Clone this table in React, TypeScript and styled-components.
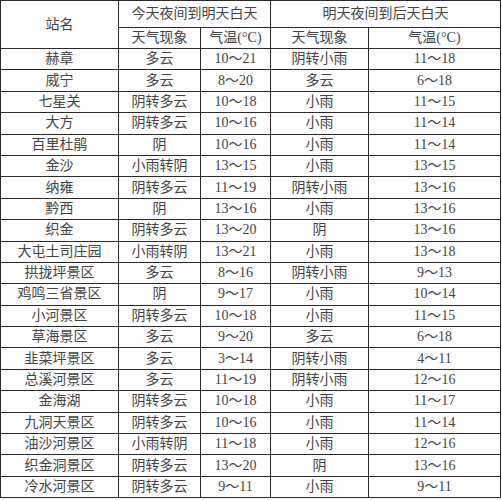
import styled, { createGlobalStyle } from "styled-components";

const GlobalStyle = createGlobalStyle`
  html, body {
    margin: 0;
    padding: 0;
    background: #ffffff;
  }
`;

type Row = [string, string, string, string, string];

const rows: Row[] = [
  ["赫章", "多云", "10～21", "阴转小雨", "11～18"],
  ["威宁", "多云", "8～20", "多云", "6～18"],
  ["七星关", "阴转多云", "10～18", "小雨", "11～15"],
  ["大方", "阴转多云", "10～16", "小雨", "11～14"],
  ["百里杜鹃", "阴", "10～16", "小雨", "11～14"],
  ["金沙", "小雨转阴", "13～15", "小雨", "13～15"],
  ["纳雍", "阴转多云", "11～19", "阴转小雨", "13～16"],
  ["黔西", "阴", "13～16", "小雨", "13～16"],
  ["织金", "阴转多云", "13～20", "阴", "13～16"],
  ["大屯土司庄园", "小雨转阴", "13～21", "小雨", "13～18"],
  ["拱拢坪景区", "多云", "8～16", "阴转小雨", "9～13"],
  ["鸡鸣三省景区", "阴", "9～17", "小雨", "10～14"],
  ["小河景区", "阴转多云", "10～18", "小雨", "11～15"],
  ["草海景区", "多云", "9～20", "多云", "6～18"],
  ["韭菜坪景区", "多云", "3～14", "阴转小雨", "4～11"],
  ["总溪河景区", "多云", "11～19", "阴转小雨", "12～16"],
  ["金海湖", "阴转多云", "10～18", "小雨", "11～17"],
  ["九洞天景区", "阴转多云", "10～16", "小雨", "11～14"],
  ["油沙河景区", "小雨转阴", "11～18", "小雨", "12～16"],
  ["织金洞景区", "阴转多云", "13～20", "阴", "13～16"],
  ["冷水河景区", "阴转多云", "9～11", "小雨", "9～11"],
];

export default function App() {
  return (
    <>
      <GlobalStyle />
      <Table>
        <colgroup>
          <col style={{ width: 118 }} />
          <col style={{ width: 82 }} />
          <col style={{ width: 70 }} />
          <col style={{ width: 98 }} />
          <col style={{ width: 132 }} />
        </colgroup>
        <thead>
          <TopRow>
            <Cell rowSpan={2}>站名</Cell>
            <Cell colSpan={2}>今天夜间到明天白天</Cell>
            <Cell colSpan={2}>明天夜间到后天白天</Cell>
          </TopRow>
          <SubRow>
            <Cell>天气现象</Cell>
            <Cell>气温(°C)</Cell>
            <Cell>天气现象</Cell>
            <Cell>气温(°C)</Cell>
          </SubRow>
        </thead>
        <tbody>
          {rows.map((r) => (
            <DataRow key={r[0]}>
              {r.map((v, i) => (
                <Cell key={i}>{v}</Cell>
              ))}
            </DataRow>
          ))}
        </tbody>
      </Table>
    </>
  );
}

const Table = styled.table`
  border-collapse: collapse;
  table-layout: fixed;
  width: 501px;
  font-family: "Liberation Serif", "Noto Sans CJK SC", serif;
  font-size: 14px;
  color: #444444;
`;

const TopRow = styled.tr`
  height: 27px;
`;

const SubRow = styled.tr`
  height: 21px;
`;

const DataRow = styled.tr`
  height: 21.4px;
`;

const Cell = styled.td`
  border: 1px solid #2a2a2a;
  padding: 0;
  text-align: center;
  vertical-align: middle;
  font-weight: 400;
  line-height: 1;
  white-space: nowrap;
  overflow: hidden;
`;
